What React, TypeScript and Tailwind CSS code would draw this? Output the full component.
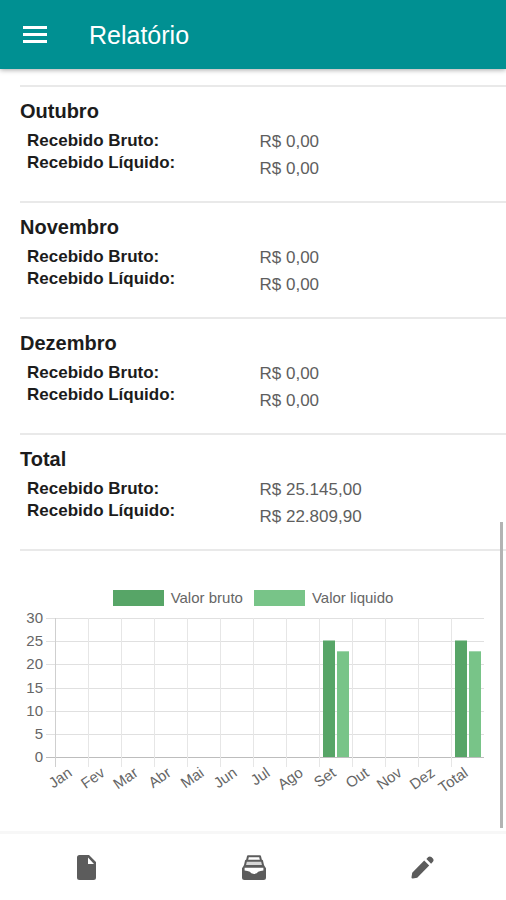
const sections = [
  { title: "Outubro", gross: "R$ 0,00", net: "R$ 0,00" },
  { title: "Novembro", gross: "R$ 0,00", net: "R$ 0,00" },
  { title: "Dezembro", gross: "R$ 0,00", net: "R$ 0,00" },
  { title: "Total", gross: "R$ 25.145,00", net: "R$ 22.809,90" },
];

const months = [
  { label: "Jan", gross: 0, net: 0 },
  { label: "Fev", gross: 0, net: 0 },
  { label: "Mar", gross: 0, net: 0 },
  { label: "Abr", gross: 0, net: 0 },
  { label: "Mai", gross: 0, net: 0 },
  { label: "Jun", gross: 0, net: 0 },
  { label: "Jul", gross: 0, net: 0 },
  { label: "Ago", gross: 0, net: 0 },
  { label: "Set", gross: 25.145, net: 22.81 },
  { label: "Out", gross: 0, net: 0 },
  { label: "Nov", gross: 0, net: 0 },
  { label: "Dez", gross: 0, net: 0 },
  { label: "Total", gross: 25.145, net: 22.81 },
];

const ticks = [30, 25, 20, 15, 10, 5, 0];

// Plot area in the chart's own units.
const LEFT = 55;
const TOP = 10;
const HEIGHT = 139;
const STEP = 33;
const BOTTOM = TOP + HEIGHT;
const RIGHT = LEFT + STEP * months.length;

const yOf = (value: number) => BOTTOM - (value / 30) * HEIGHT;

function Section({ title, gross, net }: { title: string; gross: string; net: string }) {
  return (
    <section className="ml-5 border-t-2 border-[#e9e9e9] pt-[10px] pb-[19px]">
      <h2 className="text-xl leading-7 font-bold text-[#1c1c1c]">{title}</h2>
      <dl className="grid grid-flow-col grid-cols-2 pt-[3px] pr-[14px] pl-[7px] text-[17px]">
        <div className="flex flex-col pt-[2px] leading-[22px] font-bold text-[#1c1c1c]">
          <dt>Recebido Bruto:</dt>
          <dt>Recebido Líquido:</dt>
        </div>
        <div className="flex flex-col leading-[27px] text-[#5e5e5e]">
          <dd>{gross}</dd>
          <dd>{net}</dd>
        </div>
      </dl>
    </section>
  );
}

function Chart() {
  return (
    <svg
      viewBox="0 0 506 190"
      className="block w-full"
      role="img"
      aria-label="Valor bruto e valor liquido por mês"
    >
      <g shapeRendering="crispEdges">
        {ticks.map((t) => (
          <rect
            key={t}
            x={LEFT - 9}
            y={Math.round(yOf(t))}
            width={RIGHT - LEFT + 9}
            height={1}
            fill={t === 0 ? "#bdbdbd" : "#e0e0e0"}
          />
        ))}
        {months.map((m, i) => (
          <rect
            key={m.label}
            x={LEFT + i * STEP}
            y={TOP}
            width={1}
            height={HEIGHT + 10}
            fill={i === 0 ? "#cfcfcf" : "#e6e6e6"}
          />
        ))}
      </g>
      {months.map((m, i) => (
        <g key={m.label}>
          <rect x={LEFT + i * STEP + 4} y={yOf(m.gross)} width={12} height={BOTTOM - yOf(m.gross)} fill="#57a567" />
          <rect x={LEFT + i * STEP + 18} y={yOf(m.net)} width={12} height={BOTTOM - yOf(m.net)} fill="#78c488" />
        </g>
      ))}
      <g fill="#666" fontSize={15}>
        {ticks.map((t) => (
          <text key={t} x={43} y={yOf(t) + 5} textAnchor="end">
            {t}
          </text>
        ))}
        {months.map((m, i) => (
          <text
            key={m.label}
            textAnchor="end"
            transform={`translate(${LEFT + i * STEP + 18} ${BOTTOM + 18}) rotate(-35)`}
          >
            {m.label}
          </text>
        ))}
      </g>
    </svg>
  );
}

function DocumentIcon() {
  return (
    <svg viewBox="0 0 19 25" className="h-[25px] w-[19px]" aria-hidden="true">
      <path
        fill="currentColor"
        fillRule="evenodd"
        d="M2.5 0H12l7 7v15.5a2.5 2.5 0 0 1-2.5 2.5h-14A2.5 2.5 0 0 1 0 22.5v-20A2.5 2.5 0 0 1 2.5 0zM11 2.6V9h6z"
      />
    </svg>
  );
}

function FilingIcon() {
  return (
    <svg viewBox="0 0 24 25" className="h-[25px] w-6" aria-hidden="true">
      <path fill="none" stroke="currentColor" strokeWidth="2" strokeLinejoin="round" d="M5 5.5 6 1.2h12l1 4.3" />
      <path fill="#d6d6d6" stroke="currentColor" strokeWidth="2" strokeLinejoin="round" d="M2.8 11 4 5.8h16L21.2 11z" />
      <path
        fill="currentColor"
        fillRule="evenodd"
        d="M2 10.2h20l2 3v9.3a2.5 2.5 0 0 1-2.5 2.5h-19A2.5 2.5 0 0 1 0 22.5v-9.3zM2.6 12.8v2.6q3 .2 5.2 1.4a4.4 3 0 0 0 8.4 0q2.2-1.2 5.2-1.4v-2.6z"
      />
    </svg>
  );
}

function PencilIcon() {
  return (
    <svg viewBox="0 0 23 23" className="size-[23px]" aria-hidden="true">
      <path
        fill="currentColor"
        d="M13.2 4.6l5 5L6.2 21.8 1.8 22.6Q.4 22.7.5 21.3L1.2 16.8zM15.4 3l1.8-1.9q1.6-1.3 3.2 0l1.5 1.5q1.3 1.6 0 3.2L20.1 7.7z"
      />
    </svg>
  );
}

export default function App() {
  return (
    <div className="flex h-screen flex-col bg-white font-['Liberation_Sans',Arial,sans-serif]">
      <header className="z-10 flex h-[69px] shrink-0 items-center gap-[42px] bg-[#009092] pl-[23px] text-white shadow-[0_1px_5px_rgba(0,0,0,0.35)]">
        <button type="button" aria-label="Menu" className="flex w-6 flex-col gap-1">
          <span className="h-[3px] bg-white" />
          <span className="h-[3px] bg-white" />
          <span className="h-[3px] bg-white" />
        </button>
        <h1 className="text-[25px] leading-8 font-medium">Relatório</h1>
      </header>

      <main className="relative min-h-0 flex-1 overflow-hidden pt-4">
        {sections.map((s) => (
          <Section key={s.title} {...s} />
        ))}
        <div className="ml-5 border-t-2 border-[#e9e9e9]" />
        <div className="pt-[37px]">
          <div className="flex justify-center gap-[11px] text-[15px] leading-5 text-[#666]">
            <div className="flex items-center gap-[7px]">
              <span className="h-4 w-[51px] bg-[#57a567]" />
              Valor bruto
            </div>
            <div className="flex items-center gap-[7px]">
              <span className="h-4 w-[51px] bg-[#78c488]" />
              Valor liquido
            </div>
          </div>
          <Chart />
        </div>
        <div className="absolute right-[3px] bottom-[3px] h-[306px] w-[3px] bg-[#b3b3b3]" />
      </main>

      <nav className="grid h-[69px] shrink-0 grid-cols-3 border-t-3 border-[#f7f7f7] pl-[2px] text-[#5c5c5c]">
        <button type="button" aria-label="Documento" className="flex items-center justify-center">
          <DocumentIcon />
        </button>
        <button type="button" aria-label="Arquivo" className="flex items-center justify-center">
          <FilingIcon />
        </button>
        <button type="button" aria-label="Editar" className="flex items-center justify-center">
          <PencilIcon />
        </button>
      </nav>
    </div>
  );
}
